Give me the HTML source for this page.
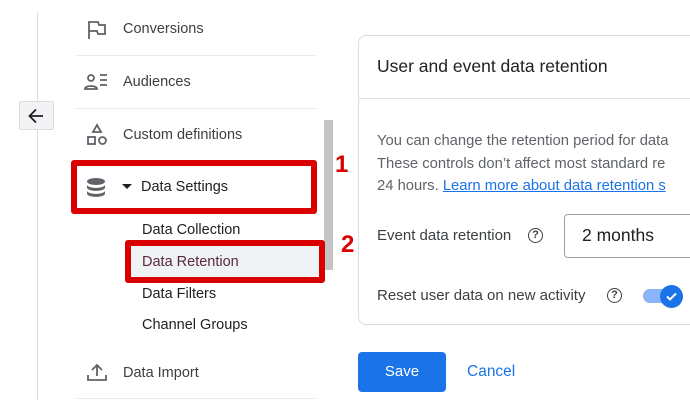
<!DOCTYPE html>
<html><head><style>
body{margin:0;width:690px;height:400px;background:#fff;font-family:"Liberation Sans",Arial,sans-serif;position:relative;overflow:hidden;color:#202124}
.a{position:absolute}
.t{font-size:14.5px;color:#3c4043}
.sep{position:absolute;left:76px;width:240px;height:1px;background:#e8eaed}
</style></head><body>
<div class="a" style="left:37px;top:12px;width:1px;height:388px;background:#dadce0"></div>
<div class="a" style="left:19px;top:101px;width:35px;height:29px;background:#f1f3f4;border:1px solid #dadce0;box-sizing:border-box;border-radius:2px"></div>
<svg class="a" style="left:26px;top:106px" width="20" height="20" viewBox="0 0 20 20"><path d="M17 10H4M10 3.5L3.5 10 10 16.5" stroke="#202124" stroke-width="1.8" fill="none"/></svg>

<svg class="a" style="left:86px;top:20px" width="22" height="20" viewBox="0 0 22 20"><path d="M3 19V2h9l1 3h6v9h-7l-1-3H3" stroke="#5f6368" stroke-width="1.8" fill="none"/></svg>
<div class="a t" style="left:123px;top:21px">Conversions</div>
<div class="sep" style="top:55px"></div>
<svg class="a" style="left:84px;top:72px" width="26" height="20" viewBox="0 0 26 20"><circle cx="7" cy="6" r="3" stroke="#5f6368" stroke-width="1.8" fill="none"/><path d="M1 17c0-4 12-4 12 0z" stroke="#5f6368" stroke-width="1.8" fill="none"/><path d="M16 3h7M16 8h7M16 13h7" stroke="#5f6368" stroke-width="1.8"/></svg>
<div class="a t" style="left:123px;top:74px">Audiences</div>
<div class="sep" style="top:108px"></div>
<svg class="a" style="left:85px;top:123px" width="24" height="24" viewBox="0 0 24 24"><path d="M12 2l4 7H8z" stroke="#5f6368" stroke-width="1.8" fill="none"/><rect x="3" y="14" width="7" height="7" stroke="#5f6368" stroke-width="1.8" fill="none"/><circle cx="17.5" cy="17.5" r="3.5" stroke="#5f6368" stroke-width="1.8" fill="none"/></svg>
<div class="a t" style="left:123px;top:127px">Custom definitions</div>

<div class="a" style="left:324px;top:120px;width:9px;height:150px;background:#c4c4c4"></div>

<div class="a" style="left:71px;top:160px;width:246px;height:54px;border:6px solid #d80000;box-sizing:border-box;border-radius:3px"></div>
<svg class="a" style="left:85px;top:177px" width="22" height="22" viewBox="0 0 22 22"><ellipse cx="11" cy="4.5" rx="9" ry="3.5" fill="#5f6368"/><path d="M2 7.5c0 4.5 18 4.5 18 0v3c0 4.5-18 4.5-18 0z" fill="#5f6368"/><path d="M2 13.5c0 4.5 18 4.5 18 0v3c0 4.5-18 4.5-18 0z" fill="#5f6368"/></svg>
<div class="a" style="left:122px;top:184px;width:0;height:0;border-left:5px solid transparent;border-right:5px solid transparent;border-top:5px solid #202124"></div>
<div class="a t" style="left:141px;top:179px;color:#202124">Data Settings</div>
<div class="a" style="left:335px;top:151px;font-size:24px;font-weight:bold;color:#d80000">1</div>

<div class="a t" style="left:142px;top:222px;color:#202124">Data Collection</div>
<div class="a" style="left:125px;top:240px;width:200px;height:43px;border:6px solid #d80000;box-sizing:border-box;border-radius:3px;background:#f0f3f6"></div>
<div class="a t" style="left:142px;top:254px;color:#5a2a3a">Data Retention</div>
<div class="a" style="left:341px;top:231px;font-size:24px;font-weight:bold;color:#d80000">2</div>
<div class="a t" style="left:142px;top:286px;color:#202124">Data Filters</div>
<div class="a t" style="left:142px;top:317px;color:#202124">Channel Groups</div>
<svg class="a" style="left:86px;top:362px" width="22" height="20" viewBox="0 0 22 20"><path d="M11 14V3M6 8l5-5 5 5M2 13v5h18v-5" stroke="#5f6368" stroke-width="1.8" fill="none"/></svg>
<div class="a t" style="left:123px;top:365px">Data Import</div>
<div class="sep" style="top:398px"></div>

<div class="a" style="left:358px;top:35px;width:350px;height:290px;border:1px solid #dadce0;border-radius:8px;box-sizing:border-box"></div>
<div class="a" style="left:359px;top:98px;width:331px;height:1px;background:#e0e0e0"></div>
<div class="a" style="left:377px;top:56px;font-size:17.5px;color:#202124">User and event data retention</div>
<div class="a" style="left:377px;top:130px;font-size:14.8px;line-height:22.5px;color:#5f6368;white-space:nowrap">You can change the retention period for data<br>These controls don’t affect most standard re<br>24 hours. <span style="color:#1a73e8;text-decoration:underline">Learn more about data retention s</span></div>
<div class="a" style="left:377px;top:227px;font-size:15px;color:#3c4043">Event data retention</div>
<div class="a" style="left:528px;top:228px;width:13px;height:13px;border:1.6px solid #3c4043;border-radius:50%;font-size:11px;font-weight:bold;text-align:center;line-height:13px;color:#3c4043">?</div>
<div class="a" style="left:564px;top:214px;width:140px;height:44px;border:1px solid #9aa0a6;border-radius:4px;box-sizing:border-box"></div>
<div class="a" style="left:582px;top:225px;font-size:17.5px;color:#202124">2 months</div>
<div class="a" style="left:377px;top:287px;font-size:15px;color:#3c4043">Reset user data on new activity</div>
<div class="a" style="left:607px;top:288px;width:13px;height:13px;border:1.6px solid #3c4043;border-radius:50%;font-size:11px;font-weight:bold;text-align:center;line-height:13px;color:#3c4043">?</div>
<div class="a" style="left:643px;top:289px;width:36px;height:14px;border-radius:7px;background:#8ab4f8"></div>
<div class="a" style="left:660px;top:285px;width:23px;height:23px;border-radius:50%;background:#1a73e8"></div>
<svg class="a" style="left:664px;top:289px" width="15" height="15" viewBox="0 0 15 15"><path d="M3 7.5l3 3 6-6" stroke="#fff" stroke-width="2" fill="none"/></svg>

<div class="a" style="left:358px;top:352px;width:88px;height:40px;background:#1a73e8;border-radius:4px;color:#fff;font-size:15px;text-align:center;line-height:40px">Save</div>
<div class="a" style="left:467px;top:363px;font-size:15.5px;color:#1a73e8">Cancel</div>
</body></html>
